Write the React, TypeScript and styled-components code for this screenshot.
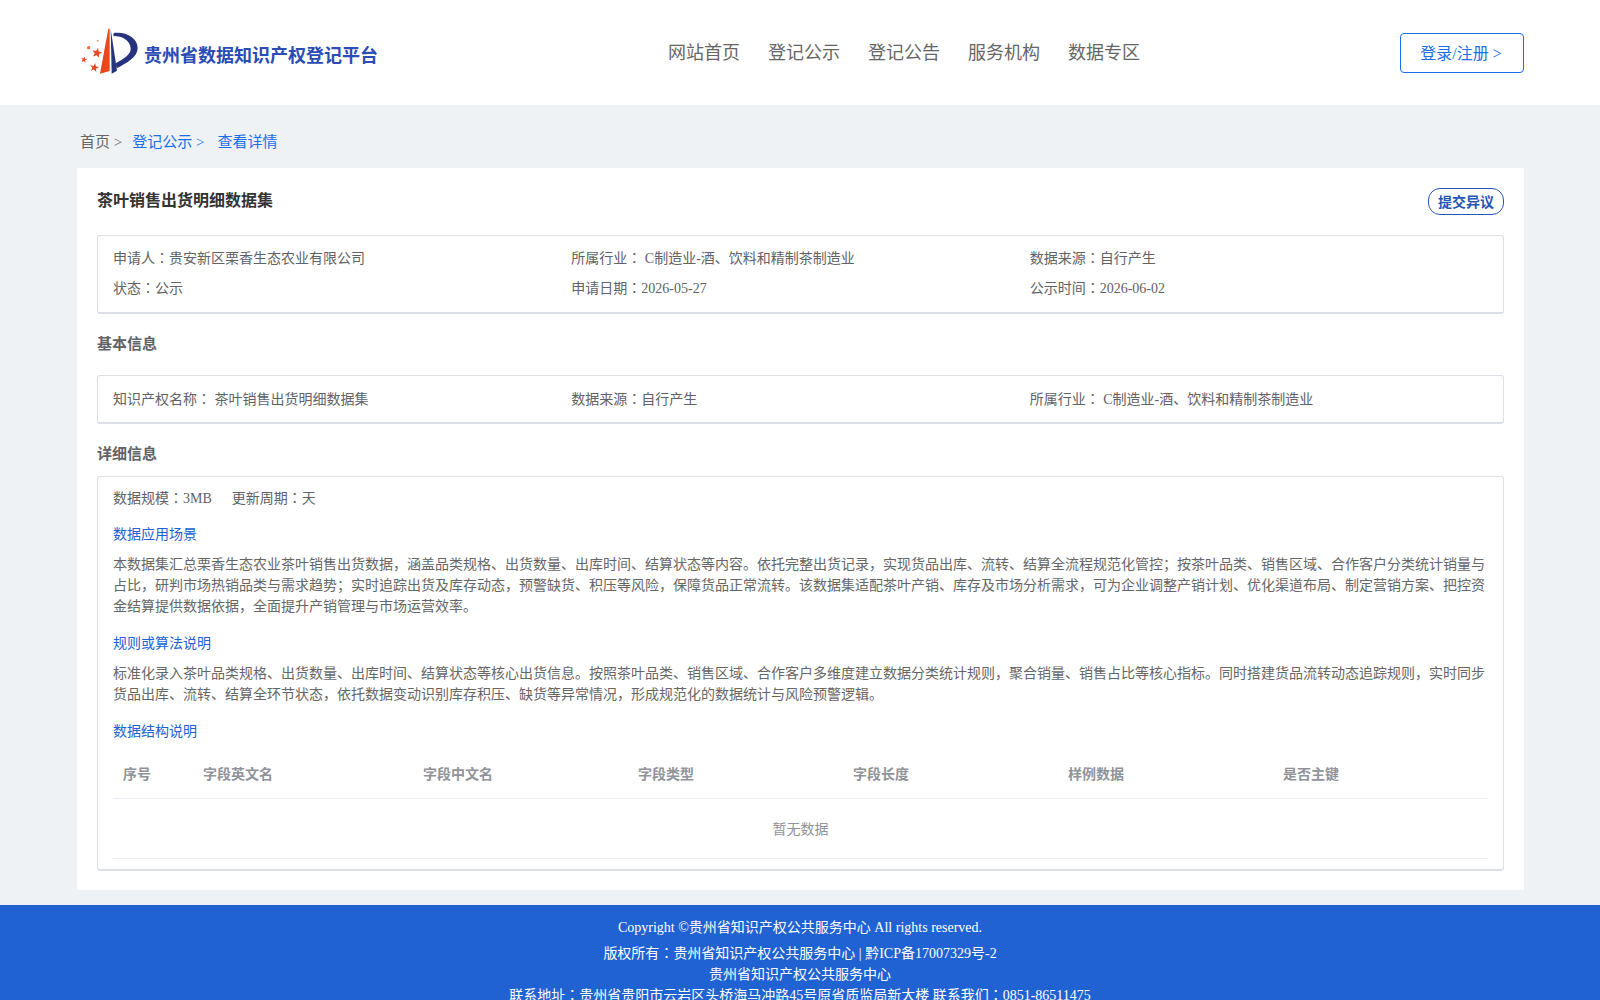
import React from 'react';
import styled, { createGlobalStyle } from 'styled-components';

const GlobalStyle = createGlobalStyle`
  html, body {
    margin: 0;
    padding: 0;
    background: #eef2f5;
    font-family: "Liberation Serif", "Noto Sans CJK SC", serif;
    font-size: 14px;
    color: #606266;
  }
  * { box-sizing: border-box; }
`;

const Header = styled.header`
  height: 105px;
  background: #fff;
  padding: 0 76px 0 77px;
  display: grid;
  grid-template-columns: 591px 1fr auto;
  align-items: center;
`;

const Brand = styled.div`
  display: flex;
  align-items: center;
  gap: 2px;
  margin-left: -1px;
`;

const BrandName = styled.span`
  font-size: 18px;
  font-weight: 700;
  color: #2b4bb5;
  padding-top: 2px;
`;

const Nav = styled.nav`
  display: flex;
  gap: 28px;
  margin-bottom: 4px;
`;

const NavLink = styled.a`
  font-size: 18px;
  color: #666;
`;

const LoginButton = styled.button`
  width: 124px;
  height: 40px;
  padding: 0 2px 2px 0;
  border: 1px solid #1a6fe8;
  border-radius: 4px;
  background: #fff;
  color: #1a6fe8;
  font: inherit;
  font-size: 16px;
`;

const Crumbs = styled.div`
  height: 63px;
  padding: 8px 0 0 80px;
  display: flex;
  align-items: center;
  font-size: 15px;
`;

const Crumb = styled.span<{ $active?: boolean; $gap: number }>`
  color: ${({ $active }) => ($active ? '#1a6fe8' : '#666')};
  margin-right: ${({ $gap }) => $gap}px;
`;

const Card = styled.main`
  margin: 0 76px 0 77px;
  background: #fff;
  padding: 20px 20px 19px;
`;

const TitleRow = styled.div`
  display: flex;
  justify-content: space-between;
  align-items: flex-start;
  height: 47px;
`;

const Title = styled.h1`
  margin: 0;
  font-size: 16px;
  line-height: 25px;
  font-weight: 700;
  color: #333;
`;

const ObjectionButton = styled.button`
  height: 27px;
  padding: 0 9px 2px;
  border: 1px solid #2255b5;
  border-radius: 12px;
  background: #fff;
  color: #2255b5;
  font: inherit;
  font-size: 14px;
  font-weight: 700;
`;

const Panel = styled.section`
  border: 1px solid #dcdfe6;
  border-bottom-width: 2px;
  border-radius: 3px;
  padding: 0 15px;
`;

const InfoGrid = styled.div<{ $top: number; $bottom: number }>`
  display: grid;
  grid-template-columns: repeat(3, 1fr);
  grid-auto-rows: 30px;
  align-items: center;
  padding: ${({ $top }) => $top}px 0 ${({ $bottom }) => $bottom}px;
`;

const SectionHeading = styled.h2<{ $height: number; $top?: number; $bottom?: number }>`
  margin: 0;
  height: ${({ $height }) => $height}px;
  padding: ${({ $top }) => $top ?? 0}px 0 ${({ $bottom }) => $bottom ?? 0}px;
  display: flex;
  align-items: center;
  font-size: 15px;
  font-weight: 700;
  color: #606266;
`;

const StatsRow = styled.div`
  display: flex;
  gap: 20px;
  height: 43px;
  padding-bottom: 3px;
  align-items: center;
`;

const SubHeading = styled.h3`
  margin: 0;
  height: 26px;
  display: flex;
  align-items: center;
  font-size: 14px;
  font-weight: 400;
  color: #2162d2;
`;

const Paragraph = styled.p`
  margin: 8px 0 12px;
  font-size: 14px;
  line-height: 21px;
  color: #666;
`;

const FieldTable = styled.table`
  width: 100%;
  border-collapse: collapse;
  table-layout: fixed;
  margin-top: 7px;
  margin-bottom: 10px;
`;

const HeadCell = styled.th<{ $width?: number }>`
  width: ${({ $width }) => ($width ? `${$width}px` : 'auto')};
  height: 48px;
  padding: 0 10px 2px;
  text-align: left;
  font-size: 14px;
  font-weight: 700;
  color: #909399;
  border-bottom: 1px solid #ebeef5;
`;

const EmptyCell = styled.td`
  height: 60px;
  padding-bottom: 2px;
  text-align: center;
  color: #909399;
  border-bottom: 1px solid #ebeef5;
`;

const Footer = styled.footer`
  margin-top: 15px;
  background: #2162d2;
  color: #fff;
  text-align: center;
  padding: 12px 0 6px;
  font-size: 14px;
  line-height: 21px;
`;

const Copyright = styled.div`
  margin-bottom: 5px;
`;

// the TC cut centres the colon in the em box, the way the page renders it
const Colon = styled.span`
  font-family: "Noto Sans CJK TC", sans-serif;
  line-height: 0;
`;

const Zh = ({ children }: { children: string }) => (
  <>
    {children.split(/(：)/).map((part, i) =>
      i % 2 === 1 ? <Colon key={i}>{part}</Colon> : part
    )}
  </>
);

const starPoints = (cx: number, cy: number, r: number, turn: number) =>
  Array.from({ length: 10 }, (_, i) => {
    const radius = i % 2 === 0 ? r : r * 0.42;
    const angle = (i * Math.PI) / 5 - Math.PI / 2 + turn;
    return `${(cx + radius * Math.cos(angle)).toFixed(1)},${(cy + radius * Math.sin(angle)).toFixed(1)}`;
  }).join(' ');

const Logo = () => (
  <svg width="66" height="58" viewBox="0 0 198 174" aria-hidden="true">
    <path d="M97 14 L101 14 L101 141 L72 149 Z" fill="#e8481c" />
    <path d="M104 14 L123 140 L107 149 Z" fill="#27337f" />
    <path d="M113 27 C150 22 185 42 185 72 C185 100 150 118 122 133 L119 118 C140 106 166 92 164 72 C162 50 140 36 112 36 Z" fill="#27337f" />
    <polygon points={starPoints(63, 87, 16, 0.2)} fill="#e8481c" />
    <polygon points={starPoints(55, 131, 14, 0.2)} fill="#e8481c" />
    <polygon points={starPoints(24, 107, 10, 0.2)} fill="#e8481c" />
    <circle cx="38" cy="71" r="5" fill="#ee6a3c" />
    <circle cx="65" cy="50" r="3" fill="#f29a78" />
  </svg>
);

const columns = [
  { label: '序号', width: 80 },
  { label: '字段英文名', width: 220 },
  { label: '字段中文名', width: 215 },
  { label: '字段类型', width: 215 },
  { label: '字段长度', width: 215 },
  { label: '样例数据', width: 215 },
  { label: '是否主键' },
];

export default function App() {
  return (
    <>
      <GlobalStyle />
      <Header>
        <Brand>
          <Logo />
          <BrandName>贵州省数据知识产权登记平台</BrandName>
        </Brand>
        <Nav>
          <NavLink>网站首页</NavLink>
          <NavLink>登记公示</NavLink>
          <NavLink>登记公告</NavLink>
          <NavLink>服务机构</NavLink>
          <NavLink>数据专区</NavLink>
        </Nav>
        <LoginButton>登录/注册 &gt;</LoginButton>
      </Header>

      <Crumbs>
        <Crumb $gap={10}>首页 &gt;</Crumb>
        <Crumb $active $gap={13}>登记公示 &gt;</Crumb>
        <Crumb $active $gap={0}>查看详情</Crumb>
      </Crumbs>

      <Card>
        <TitleRow>
          <Title>茶叶销售出货明细数据集</Title>
          <ObjectionButton>提交异议</ObjectionButton>
        </TitleRow>

        <Panel>
          <InfoGrid $top={6} $bottom={10}>
            <span><Zh>申请人：贵安新区栗香生态农业有限公司</Zh></span>
            <span><Zh>所属行业： C制造业-酒、饮料和精制茶制造业</Zh></span>
            <span><Zh>数据来源：自行产生</Zh></span>
            <span><Zh>状态：公示</Zh></span>
            <span><Zh>申请日期：2026-05-27</Zh></span>
            <span><Zh>公示时间：2026-06-02</Zh></span>
          </InfoGrid>
        </Panel>

        <SectionHeading $height={61} $bottom={4}>基本信息</SectionHeading>

        <Panel>
          <InfoGrid $top={7} $bottom={9}>
            <span><Zh>知识产权名称： 茶叶销售出货明细数据集</Zh></span>
            <span><Zh>数据来源：自行产生</Zh></span>
            <span><Zh>所属行业： C制造业-酒、饮料和精制茶制造业</Zh></span>
          </InfoGrid>
        </Panel>

        <SectionHeading $height={52} $top={5}>详细信息</SectionHeading>

        <Panel>
          <StatsRow>
            <span><Zh>数据规模：3MB</Zh></span>
            <span><Zh>更新周期：天</Zh></span>
          </StatsRow>

          <SubHeading>数据应用场景</SubHeading>
          <Paragraph>
            本数据集汇总栗香生态农业茶叶销售出货数据，涵盖品类规格、出货数量、出库时间、结算状态等内容。依托完整出货记录，实现货品出库、流转、结算全流程规范化管控；按茶叶品类、销售区域、合作客户分类统计销量与占比，研判市场热销品类与需求趋势；实时追踪出货及库存动态，预警缺货、积压等风险，保障货品正常流转。该数据集适配茶叶产销、库存及市场分析需求，可为企业调整产销计划、优化渠道布局、制定营销方案、把控资金结算提供数据依据，全面提升产销管理与市场运营效率。
          </Paragraph>

          <SubHeading>规则或算法说明</SubHeading>
          <Paragraph>
            标准化录入茶叶品类规格、出货数量、出库时间、结算状态等核心出货信息。按照茶叶品类、销售区域、合作客户多维度建立数据分类统计规则，聚合销量、销售占比等核心指标。同时搭建货品流转动态追踪规则，实时同步货品出库、流转、结算全环节状态，依托数据变动识别库存积压、缺货等异常情况，形成规范化的数据统计与风险预警逻辑。
          </Paragraph>

          <SubHeading>数据结构说明</SubHeading>
          <FieldTable>
            <thead>
              <tr>
                {columns.map((col) => (
                  <HeadCell key={col.label} $width={col.width}>{col.label}</HeadCell>
                ))}
              </tr>
            </thead>
            <tbody>
              <tr>
                <EmptyCell colSpan={columns.length}>暂无数据</EmptyCell>
              </tr>
            </tbody>
          </FieldTable>
        </Panel>
      </Card>

      <Footer>
        <Copyright>Copyright ©贵州省知识产权公共服务中心 All rights reserved.</Copyright>
        <div><Zh>版权所有：贵州省知识产权公共服务中心 | 黔ICP备17007329号-2</Zh></div>
        <div>贵州省知识产权公共服务中心</div>
        <div><Zh>联系地址：贵州省贵阳市云岩区头桥海马冲路45号原省质监局新大楼 联系我们：0851-86511475</Zh></div>
      </Footer>
    </>
  );
}
